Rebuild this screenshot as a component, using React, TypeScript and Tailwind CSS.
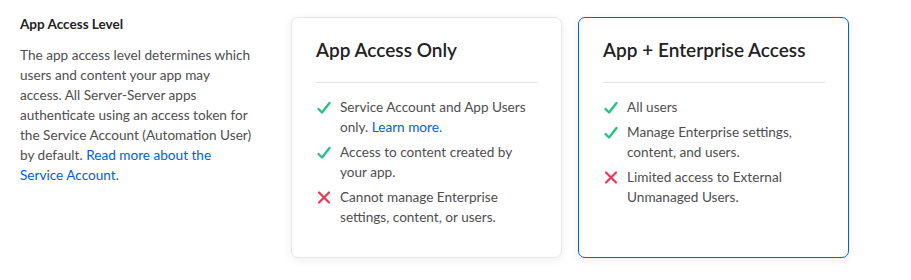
import type { ReactNode } from "react";

type Item = { ok: boolean; text: ReactNode };

const appOnly: Item[] = [
  {
    ok: true,
    text: (
      <>
        Service Account and App Users only.{" "}
        <a href="#" className="text-[#0061d5]">
          Learn more.
        </a>
      </>
    ),
  },
  { ok: true, text: "Access to content created by your app." },
  { ok: false, text: "Cannot manage Enterprise settings, content, or users." },
];

const enterprise: Item[] = [
  { ok: true, text: "All users" },
  { ok: true, text: "Manage Enterprise settings, content, and users." },
  { ok: false, text: "Limited access to External Unmanaged Users." },
];

function CheckIcon() {
  return (
    <svg width="16" height="20" viewBox="0 0 16 20" className="shrink-0">
      <polyline
        points="2.5,12 6,15.5 13.5,6"
        fill="none"
        stroke="#26c281"
        strokeWidth="2.4"
        strokeLinecap="round"
        strokeLinejoin="round"
      />
    </svg>
  );
}

function CrossIcon() {
  return (
    <svg width="16" height="20" viewBox="0 0 16 20" className="shrink-0">
      <path
        d="M3 5.5 L13 15.5 M13 5.5 L3 15.5"
        fill="none"
        stroke="#ed3757"
        strokeWidth="2.2"
        strokeLinecap="round"
      />
    </svg>
  );
}

function AccessCard({
  title,
  items,
  selected,
}: {
  title: string;
  items: Item[];
  selected?: boolean;
}) {
  return (
    <div
      className={`w-[271px] h-[241px] rounded-[7px] bg-white pl-6 pr-[23px] pt-[18px] shadow-[0_2px_10px_rgba(0,0,0,0.07)] border ${
        selected ? "border-[#0061d5]" : "border-[#e8e8e8]"
      }`}
    >
      <h3 className="text-[19px] leading-7 font-semibold text-[#222222]">{title}</h3>
      <div className="mt-[18px] mb-[14px] h-px bg-[#e4e4e4]" />
      <ul className="flex flex-col gap-[5px]">
        {items.map((item, i) => (
          <li key={i} className="flex gap-2 text-[13.6px] leading-5 text-[#4e4e4e]">
            {item.ok ? <CheckIcon /> : <CrossIcon />}
            <span>{item.text}</span>
          </li>
        ))}
      </ul>
    </div>
  );
}

export default function App() {
  return (
    <div
      className="w-[911px] h-[280px] bg-white flex"
      style={{ fontFamily: "Lato, 'Open Sans', sans-serif" }}
    >
      <div className="w-[233px] ml-5 mr-[38px] pt-[14px] shrink-0">
        <h2 className="text-[13.5px] leading-5 font-bold text-[#222222]">App Access Level</h2>
        <p className="mt-[11px] text-[13.6px] leading-5 text-[#4e4e4e]">
          The app access level determines which users and content your app may
          access. All Server-Server apps authenticate using an access token for
          the Service Account (Automation User) by default.{" "}
          <a href="#" className="text-[#0061d5]">
            Read more about the Service Account
          </a>
          .
        </p>
      </div>
      <div className="mt-[17px] flex gap-4 items-start">
        <AccessCard title="App Access Only" items={appOnly} />
        <AccessCard title="App + Enterprise Access" items={enterprise} selected />
      </div>
    </div>
  );
}
